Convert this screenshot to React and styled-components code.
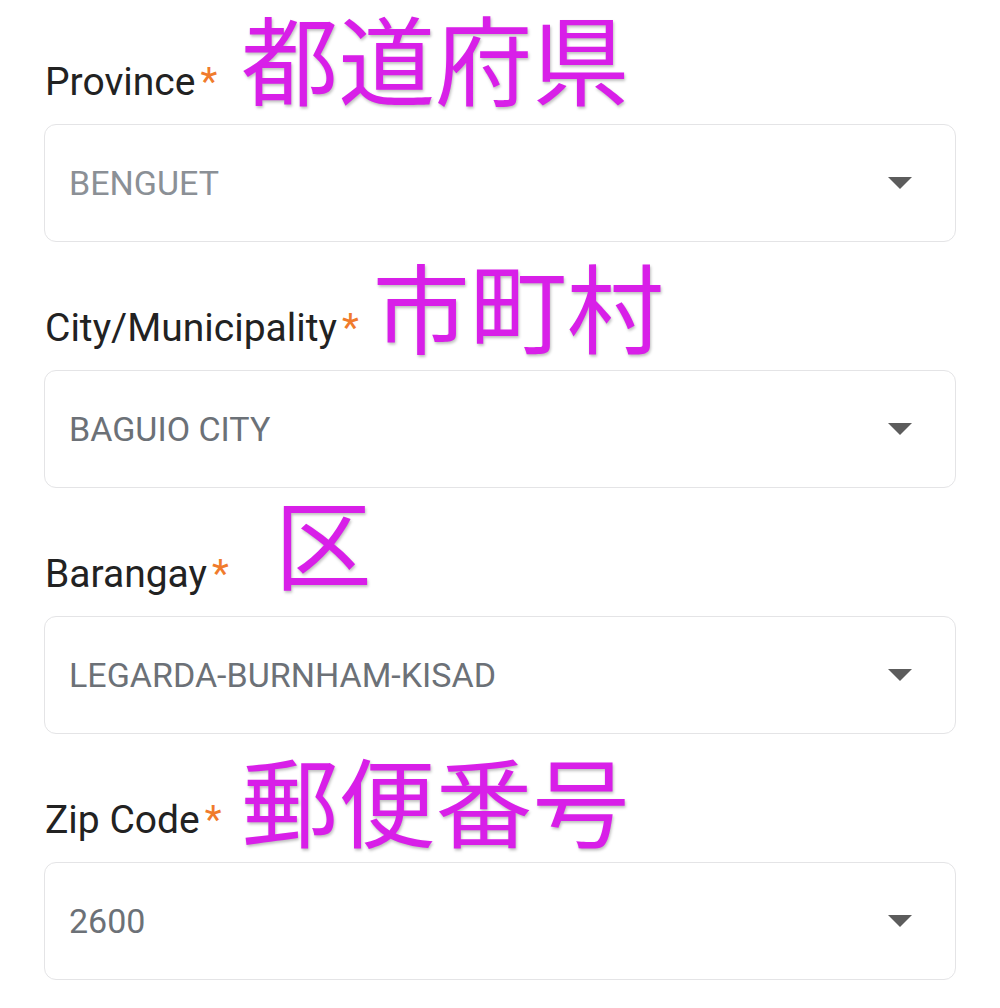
import React from "react";
import styled, { createGlobalStyle } from "styled-components";

const GlobalStyle = createGlobalStyle`
  html, body {
    margin: 0;
    padding: 0;
    background: #ffffff;
  }
  body {
    font-family: Roboto, "Noto Sans", Arial, sans-serif;
  }
`;

const fields = [
  { title: "Province", note: "都道府県", gap: 24, drop: 3, value: "BENGUET", muted: true },
  { title: "City/Municipality", note: "市町村", gap: 14, drop: 5, value: "BAGUIO CITY" },
  { title: "Barangay", note: "区", gap: 46, drop: -5, value: "LEGARDA-BURNHAM-KISAD" },
  { title: "Zip Code", note: "郵便番号", gap: 20, drop: 7, value: "2600" },
];

const App = () => {
  return (
    <>
      <GlobalStyle />
      <Page>
        {fields.map((f) => (
          <Field key={f.title}>
            <LabelRow>
              <Label>
                {f.title}
                <Required>*</Required>
              </Label>
              <Note $gap={f.gap} $drop={f.drop}>
                {f.note}
              </Note>
            </LabelRow>
            <SelectBox>
              <Value $muted={f.muted}>{f.value}</Value>
              <Caret viewBox="0 0 24 12">
                <path d="M0 0 L24 0 L12 12 Z" fill="#5c5c5c" />
              </Caret>
            </SelectBox>
          </Field>
        ))}
      </Page>
    </>
  );
};

export default App;

const Page = styled.div`
  width: 1000px;
  min-height: 1008px;
  box-sizing: border-box;
  padding: 0 44px;
  display: flex;
  flex-direction: column;
  gap: 4px;
`;

const Field = styled.div`
  display: flex;
  flex-direction: column;
  flex-shrink: 0;
`;

// the label line sits at the bottom of a fixed-height row
const LabelRow = styled.div`
  height: 124px;
  box-sizing: border-box;
  padding-bottom: 17px;
  display: flex;
  flex-wrap: wrap;
  align-content: flex-end;
  align-items: baseline;
`;

const Label = styled.span`
  font-family: Roboto, sans-serif;
  font-size: 39px;
  line-height: 1;
  color: #222222;
  padding-left: 1px;
  white-space: nowrap;
`;

const Required = styled.span`
  color: #f07b2c;
  margin-left: 5px;
`;

const Note = styled.span`
  position: relative;
  top: ${(p) => p.$drop}px;
  font-family: "Noto Sans CJK JP", "Noto Sans CJK SC", sans-serif;
  font-size: 97px;
  line-height: 1.1;
  color: #d81fe8;
  margin-left: ${(p) => p.$gap}px;
  text-shadow: 1px 2px 3px rgba(0, 0, 0, 0.25);
  white-space: nowrap;
`;

const SelectBox = styled.div`
  height: 118px;
  box-sizing: border-box;
  border: 1.5px solid #e4e4e6;
  border-radius: 12px;
  background: #ffffff;
  display: flex;
  align-items: center;
  justify-content: space-between;
  padding: 0 43px 0 24px;
  flex-shrink: 0;
`;

const Value = styled.span`
  font-family: Roboto, sans-serif;
  font-size: 34px;
  color: ${(p) => (p.$muted ? "#8b9096" : "#6c7177")};
`;

const Caret = styled.svg`
  width: 24px;
  height: 12px;
`;
